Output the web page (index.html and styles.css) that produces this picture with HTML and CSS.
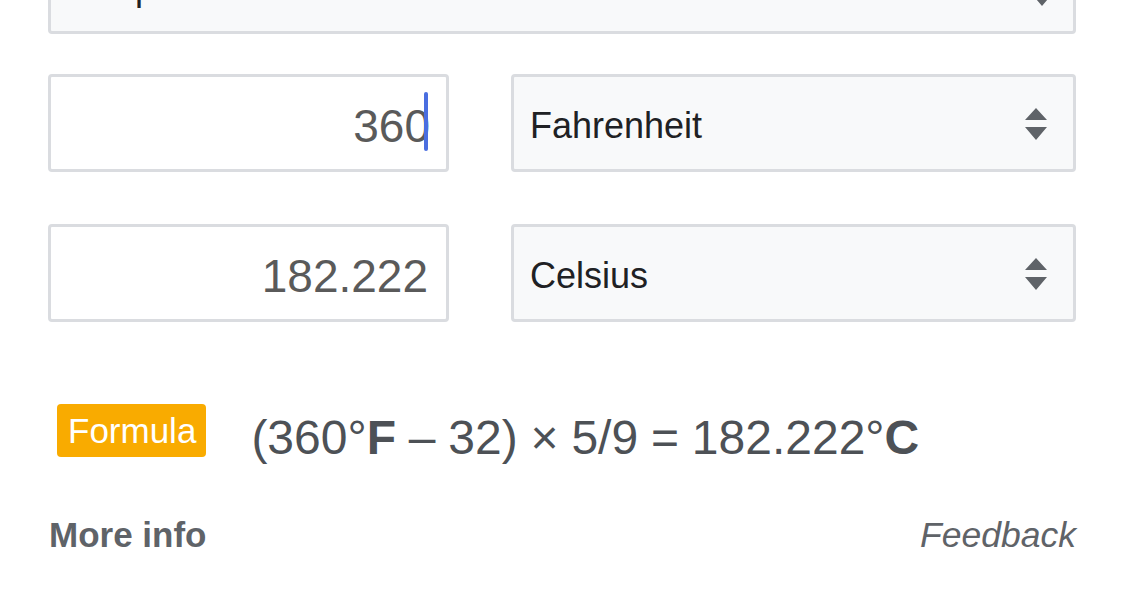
FILE: index.html
```html
<!DOCTYPE html>
<html>
<head>
<meta charset="utf-8">
<link rel="stylesheet" href="styles.css">
</head>
<body>
<div class="card">
  <div class="select select-top">
    <span class="select-text">Temperature</span>
    <svg class="arrows" width="22" height="34" viewBox="0 0 22 34"><path d="M11 1 L22 13 L0 13 Z M0 20 L22 20 L11 33 Z" fill="#5f6368"/></svg>
  </div>
  <div class="row row-first">
    <div class="input"><span class="value">360</span><span class="caret"></span></div>
    <div class="select">
      <span class="select-text">Fahrenheit</span>
      <svg class="arrows" width="22" height="34" viewBox="0 0 22 34"><path d="M11 1 L22 13 L0 13 Z M0 20 L22 20 L11 33 Z" fill="#5f6368"/></svg>
    </div>
  </div>
  <div class="row row-second">
    <div class="input"><span class="value">182.222</span></div>
    <div class="select">
      <span class="select-text">Celsius</span>
      <svg class="arrows" width="22" height="34" viewBox="0 0 22 34"><path d="M11 1 L22 13 L0 13 Z M0 20 L22 20 L11 33 Z" fill="#5f6368"/></svg>
    </div>
  </div>
  <div class="formula-row">
    <span class="badge">Formula</span>
    <span class="formula">(360°<b>F</b> – 32) × 5/9 = 182.222°<b>C</b></span>
  </div>
  <div class="footer">
    <span class="more">More info</span>
    <span class="feedback">Feedback</span>
  </div>
</div>
</body>
</html>
```

FILE: styles.css
```css
html, body {
  margin: 0;
  padding: 0;
  background: #ffffff;
  overflow: hidden;
}
body {
  font-family: "Liberation Sans", Arial, sans-serif;
}
.card {
  margin: -64px 49px 0 48px;
  display: flex;
  flex-direction: column;
}
.select {
  box-sizing: border-box;
  height: 98px;
  border: 3px solid #dadce0;
  border-radius: 4px;
  background: #f8f9fa;
  display: flex;
  align-items: flex-start;
  justify-content: space-between;
  padding: 7px 26px 0 16px;
}
.select-top {
  width: 100%;
  padding-top: 12px;
}
.select-top .select-text {
  line-height: 74px;
}
.select-text {
  font-size: 36px;
  line-height: 83px;
  color: #202124;
}
.arrows {
  margin-top: 23px;
}
.select-top .arrows {
  margin-top: 22px;
  margin-right: -6px;
}
.row {
  display: flex;
  gap: 62px;
}
.row-first {
  margin-top: 40px;
}
.row-second {
  margin-top: 52px;
}
.row .select {
  width: 565px;
}
.input {
  box-sizing: border-box;
  width: 401px;
  height: 98px;
  border: 3px solid #dadce0;
  border-radius: 4px;
  background: #ffffff;
  display: flex;
  justify-content: flex-end;
  align-items: flex-start;
  padding: 7px 18px 0 0;
}
.value {
  font-size: 46px;
  line-height: 84px;
  color: #5a5a5a;
}
.caret {
  width: 4px;
  height: 59px;
  margin: 8px 0 0 -6px;
  border-radius: 2px;
  background: #4a6ee0;
}
.formula-row {
  margin-top: 82px;
  display: flex;
  align-items: flex-start;
}
.badge {
  margin-left: 9px;
  height: 53px;
  line-height: 53px;
  padding: 0 10px 0 11px;
  background: #f9ab00;
  color: #ffffff;
  border-radius: 4px;
  font-size: 35px;
}
.formula {
  margin-left: 45px;
  margin-top: 4px;
  font-size: 48px;
  line-height: 60px;
  color: #4d5156;
  word-spacing: -0.5px;
}
.formula b {
  font-weight: bold;
}
.footer {
  margin-top: 47px;
  display: flex;
  justify-content: space-between;
  align-items: flex-start;
  padding-left: 1px;
}
.more {
  font-size: 35px;
  line-height: 40px;
  font-weight: bold;
  color: #5f6368;
}
.feedback {
  font-size: 35.5px;
  line-height: 40px;
  font-style: italic;
  color: #5f6368;
}
```
